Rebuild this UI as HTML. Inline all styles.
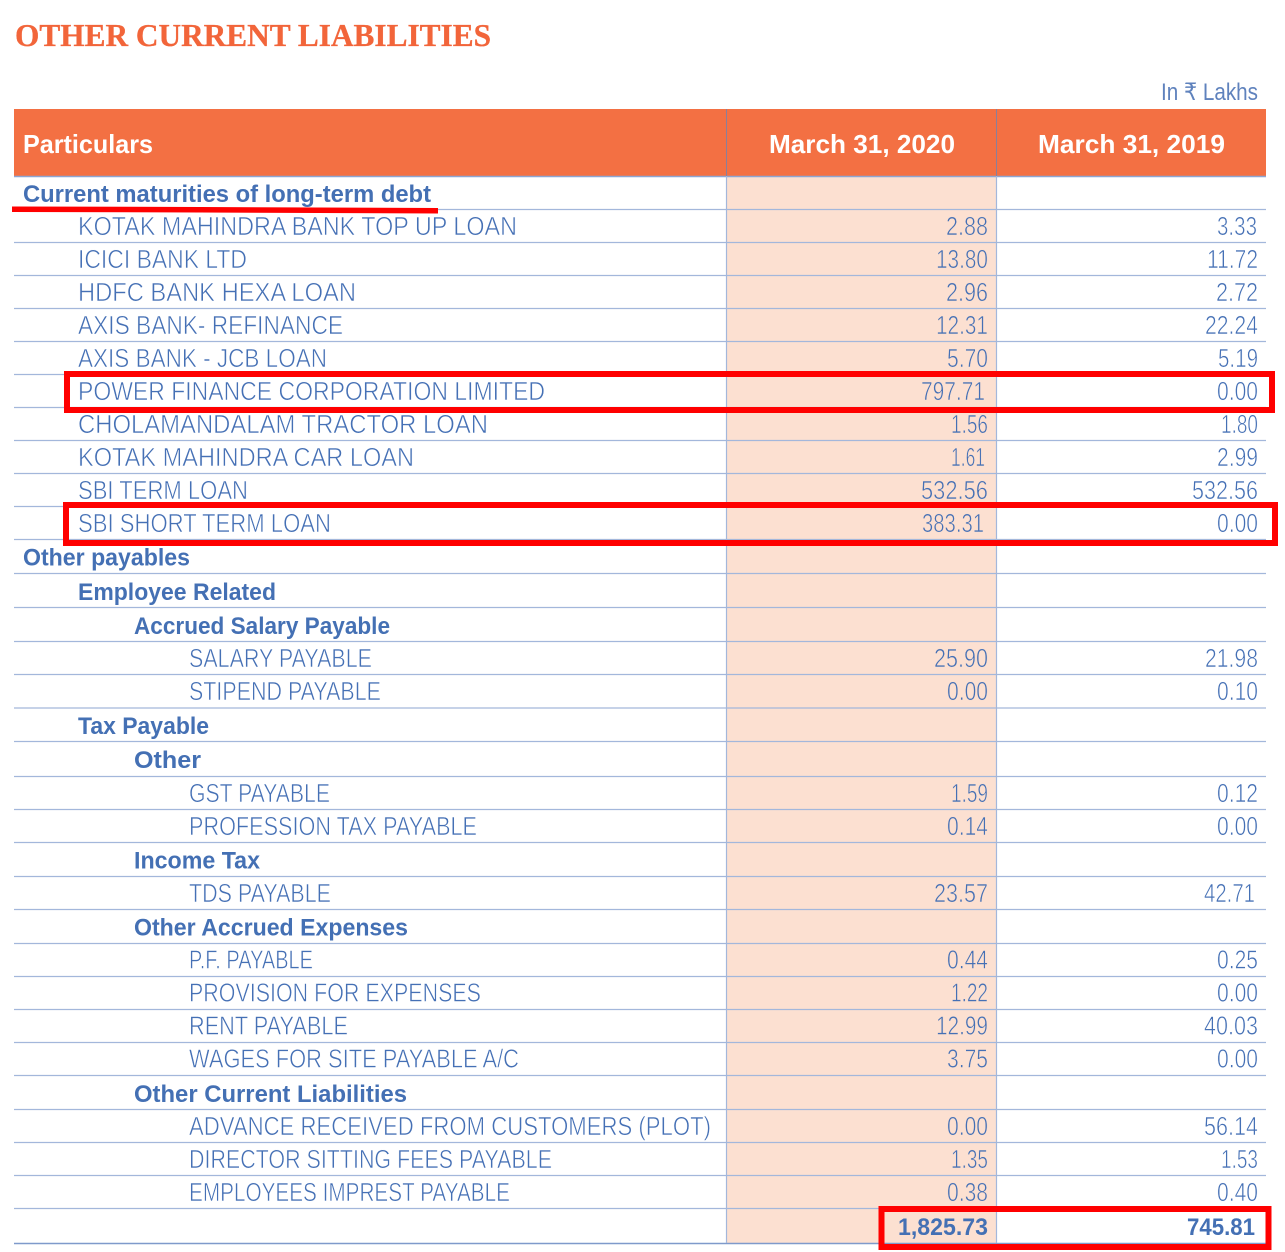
<!DOCTYPE html>
<html><head><meta charset="utf-8"><title>Other Current Liabilities</title>
<style>
html,body{margin:0;padding:0;background:#fff}
svg{display:block}
text{font-family:"Liberation Sans",sans-serif}
.r{font-size:26px;fill:#4570b5;stroke:#fff;stroke-width:.6px}
.n{font-size:26px;fill:#4570b5;stroke:#fff;stroke-width:.6px}
.p{font-size:26px;fill:#4570b5;stroke:#fce0d1;stroke-width:.6px}
.b{font-size:24px;font-weight:bold;fill:#4470b4}
.h{font-size:26px;font-weight:bold;fill:#fff}
line{stroke:#a3b7db;stroke-width:1.2}
</style></head><body>
<svg xmlns="http://www.w3.org/2000/svg" width="1285" height="1252" viewBox="0 0 1285 1252">
<rect width="1285" height="1252" fill="#fff"/>
<text x="15" y="46" textLength="476" lengthAdjust="spacingAndGlyphs" style="font-family:'Liberation Serif',serif;font-weight:bold;font-size:32px;fill:#f2653a;stroke:#f2653a;stroke-width:.3px">OTHER CURRENT LIABILITIES</text>
<text x="1161" y="100" textLength="97" lengthAdjust="spacingAndGlyphs" style="font-size:24px;fill:#5f82bd;font-family:'Liberation Sans','DejaVu Sans',sans-serif">In ₹ Lakhs</text>
<rect x="14" y="109" width="1252" height="67" fill="#f37043"/>
<rect x="727" y="177" width="270" height="1066" fill="#fce0d1"/>
<g>
<line x1="14" x2="1266" y1="176.5" y2="176.5" style="stroke:#8da5d2;stroke-width:1.5"/>
<line x1="14" x2="1266" y1="209.5" y2="209.5"/><line x1="14" x2="1266" y1="242.5" y2="242.5"/><line x1="14" x2="1266" y1="275.5" y2="275.5"/><line x1="14" x2="1266" y1="308.5" y2="308.5"/><line x1="14" x2="1266" y1="341.5" y2="341.5"/><line x1="14" x2="1266" y1="374.5" y2="374.5"/><line x1="14" x2="1266" y1="407.5" y2="407.5"/><line x1="14" x2="1266" y1="440.5" y2="440.5"/><line x1="14" x2="1266" y1="473.5" y2="473.5"/><line x1="14" x2="1266" y1="506.5" y2="506.5"/><line x1="14" x2="1266" y1="539.5" y2="539.5"/><line x1="14" x2="1266" y1="573.5" y2="573.5"/><line x1="14" x2="1266" y1="607.5" y2="607.5"/><line x1="14" x2="1266" y1="641.5" y2="641.5"/><line x1="14" x2="1266" y1="674.5" y2="674.5"/><line x1="14" x2="1266" y1="708" y2="708"/><line x1="14" x2="1266" y1="741.5" y2="741.5"/><line x1="14" x2="1266" y1="776.5" y2="776.5"/><line x1="14" x2="1266" y1="809.5" y2="809.5"/><line x1="14" x2="1266" y1="842.5" y2="842.5"/><line x1="14" x2="1266" y1="876.5" y2="876.5"/><line x1="14" x2="1266" y1="909.5" y2="909.5"/><line x1="14" x2="1266" y1="943.5" y2="943.5"/><line x1="14" x2="1266" y1="976.5" y2="976.5"/><line x1="14" x2="1266" y1="1009.5" y2="1009.5"/><line x1="14" x2="1266" y1="1042.5" y2="1042.5"/><line x1="14" x2="1266" y1="1075.5" y2="1075.5"/><line x1="14" x2="1266" y1="1109.5" y2="1109.5"/><line x1="14" x2="1266" y1="1142.5" y2="1142.5"/><line x1="14" x2="1266" y1="1175.5" y2="1175.5"/><line x1="14" x2="1266" y1="1208.5" y2="1208.5"/>
<line x1="14" x2="1266" y1="1243.5" y2="1243.5" style="stroke:#7f9acb;stroke-width:1.6"/>
<line x1="726.5" x2="726.5" y1="109" y2="176" style="stroke:#8a7f9a;stroke-width:1"/>
<line x1="996.5" x2="996.5" y1="109" y2="176" style="stroke:#8a7f9a;stroke-width:1"/>
<line x1="726.5" x2="726.5" y1="176" y2="1243"/>
<line x1="996.5" x2="996.5" y1="176" y2="1243"/>
</g>
<text class="h" x="23" y="153" textLength="130" lengthAdjust="spacingAndGlyphs">Particulars</text>
<text class="h" x="769" y="153" textLength="186" lengthAdjust="spacingAndGlyphs">March 31, 2020</text>
<text class="h" x="1038" y="153" textLength="187" lengthAdjust="spacingAndGlyphs">March 31, 2019</text>

<text class="b" x="23" y="202" textLength="408" lengthAdjust="spacingAndGlyphs">Current maturities of long-term debt</text>
<text class="r" x="78" y="235" textLength="439" lengthAdjust="spacingAndGlyphs">KOTAK MAHINDRA BANK TOP UP LOAN</text>
<text class="r" x="78" y="268" textLength="169" lengthAdjust="spacingAndGlyphs">ICICI BANK LTD</text>
<text class="r" x="78" y="301" textLength="278" lengthAdjust="spacingAndGlyphs">HDFC BANK HEXA LOAN</text>
<text class="r" x="78" y="334" textLength="265" lengthAdjust="spacingAndGlyphs">AXIS BANK- REFINANCE</text>
<text class="r" x="78" y="367" textLength="249" lengthAdjust="spacingAndGlyphs">AXIS BANK - JCB LOAN</text>
<text class="r" x="78" y="400" textLength="467" lengthAdjust="spacingAndGlyphs">POWER FINANCE CORPORATION LIMITED</text>
<text class="r" x="78" y="433" textLength="410" lengthAdjust="spacingAndGlyphs">CHOLAMANDALAM TRACTOR LOAN</text>
<text class="r" x="78" y="466" textLength="336" lengthAdjust="spacingAndGlyphs">KOTAK MAHINDRA CAR LOAN</text>
<text class="r" x="78" y="499" textLength="170" lengthAdjust="spacingAndGlyphs">SBI TERM LOAN</text>
<text class="r" x="78" y="532" textLength="253" lengthAdjust="spacingAndGlyphs">SBI SHORT TERM LOAN</text>
<text class="b" x="23" y="565.5" textLength="167" lengthAdjust="spacingAndGlyphs">Other payables</text>
<text class="b" x="78" y="600" textLength="198" lengthAdjust="spacingAndGlyphs">Employee Related</text>
<text class="b" x="134" y="634" textLength="256" lengthAdjust="spacingAndGlyphs">Accrued Salary Payable</text>
<text class="r" x="189" y="667" textLength="183" lengthAdjust="spacingAndGlyphs">SALARY PAYABLE</text>
<text class="r" x="189" y="700" textLength="192" lengthAdjust="spacingAndGlyphs">STIPEND PAYABLE</text>
<text class="b" x="78" y="734" textLength="131" lengthAdjust="spacingAndGlyphs">Tax Payable</text>
<text class="b" x="134" y="768" textLength="67" lengthAdjust="spacingAndGlyphs">Other</text>
<text class="r" x="189" y="802" textLength="141" lengthAdjust="spacingAndGlyphs">GST PAYABLE</text>
<text class="r" x="189" y="835" textLength="288" lengthAdjust="spacingAndGlyphs">PROFESSION TAX PAYABLE</text>
<text class="b" x="134" y="868.5" textLength="126" lengthAdjust="spacingAndGlyphs">Income Tax</text>
<text class="r" x="189" y="902" textLength="142" lengthAdjust="spacingAndGlyphs">TDS PAYABLE</text>
<text class="b" x="134" y="935.5" textLength="274" lengthAdjust="spacingAndGlyphs">Other Accrued Expenses</text>
<text class="r" x="189" y="968.5" textLength="124" lengthAdjust="spacingAndGlyphs">P.F. PAYABLE</text>
<text class="r" x="189" y="1001.5" textLength="292" lengthAdjust="spacingAndGlyphs">PROVISION FOR EXPENSES</text>
<text class="r" x="189" y="1034.5" textLength="159" lengthAdjust="spacingAndGlyphs">RENT PAYABLE</text>
<text class="r" x="189" y="1067.5" textLength="330" lengthAdjust="spacingAndGlyphs">WAGES FOR SITE PAYABLE A/C</text>
<text class="b" x="134" y="1102" textLength="273" lengthAdjust="spacingAndGlyphs">Other Current Liabilities</text>
<text class="r" x="189" y="1135" textLength="522" lengthAdjust="spacingAndGlyphs">ADVANCE RECEIVED FROM CUSTOMERS (PLOT)</text>
<text class="r" x="189" y="1168" textLength="363" lengthAdjust="spacingAndGlyphs">DIRECTOR SITTING FEES PAYABLE</text>
<text class="r" x="189" y="1201" textLength="321" lengthAdjust="spacingAndGlyphs">EMPLOYEES IMPREST PAYABLE</text>

<text class="p" x="946" y="235" textLength="42" lengthAdjust="spacingAndGlyphs">2.88</text>
<text class="n" x="1217" y="235" textLength="40" lengthAdjust="spacingAndGlyphs">3.33</text>
<text class="p" x="936" y="268" textLength="52" lengthAdjust="spacingAndGlyphs">13.80</text>
<text class="n" x="1207" y="268" textLength="51" lengthAdjust="spacingAndGlyphs">11.72</text>
<text class="p" x="946" y="301" textLength="42" lengthAdjust="spacingAndGlyphs">2.96</text>
<text class="n" x="1216" y="301" textLength="42" lengthAdjust="spacingAndGlyphs">2.72</text>
<text class="p" x="936" y="334" textLength="52" lengthAdjust="spacingAndGlyphs">12.31</text>
<text class="n" x="1205" y="334" textLength="53" lengthAdjust="spacingAndGlyphs">22.24</text>
<text class="p" x="947" y="367" textLength="41" lengthAdjust="spacingAndGlyphs">5.70</text>
<text class="n" x="1218" y="367" textLength="40" lengthAdjust="spacingAndGlyphs">5.19</text>
<text class="p" x="921" y="400" textLength="64" lengthAdjust="spacingAndGlyphs">797.71</text>
<text class="n" x="1217" y="400" textLength="41" lengthAdjust="spacingAndGlyphs">0.00</text>
<text class="p" x="951" y="433" textLength="37" lengthAdjust="spacingAndGlyphs">1.56</text>
<text class="n" x="1221" y="433" textLength="37" lengthAdjust="spacingAndGlyphs">1.80</text>
<text class="p" x="951" y="466" textLength="34" lengthAdjust="spacingAndGlyphs">1.61</text>
<text class="n" x="1217" y="466" textLength="41" lengthAdjust="spacingAndGlyphs">2.99</text>
<text class="p" x="921" y="499" textLength="67" lengthAdjust="spacingAndGlyphs">532.56</text>
<text class="n" x="1192" y="499" textLength="66" lengthAdjust="spacingAndGlyphs">532.56</text>
<text class="p" x="922" y="532" textLength="62" lengthAdjust="spacingAndGlyphs">383.31</text>
<text class="n" x="1217" y="532" textLength="41" lengthAdjust="spacingAndGlyphs">0.00</text>
<text class="p" x="934" y="667" textLength="54" lengthAdjust="spacingAndGlyphs">25.90</text>
<text class="n" x="1205" y="667" textLength="53" lengthAdjust="spacingAndGlyphs">21.98</text>
<text class="p" x="947" y="700" textLength="41" lengthAdjust="spacingAndGlyphs">0.00</text>
<text class="n" x="1217" y="700" textLength="41" lengthAdjust="spacingAndGlyphs">0.10</text>
<text class="p" x="951" y="802" textLength="37" lengthAdjust="spacingAndGlyphs">1.59</text>
<text class="n" x="1217" y="802" textLength="41" lengthAdjust="spacingAndGlyphs">0.12</text>
<text class="p" x="947" y="835" textLength="41" lengthAdjust="spacingAndGlyphs">0.14</text>
<text class="n" x="1217" y="835" textLength="41" lengthAdjust="spacingAndGlyphs">0.00</text>
<text class="p" x="934" y="902" textLength="54" lengthAdjust="spacingAndGlyphs">23.57</text>
<text class="n" x="1204" y="902" textLength="51" lengthAdjust="spacingAndGlyphs">42.71</text>
<text class="p" x="947" y="968.5" textLength="41" lengthAdjust="spacingAndGlyphs">0.44</text>
<text class="n" x="1217" y="968.5" textLength="41" lengthAdjust="spacingAndGlyphs">0.25</text>
<text class="p" x="951" y="1001.5" textLength="37" lengthAdjust="spacingAndGlyphs">1.22</text>
<text class="n" x="1217" y="1001.5" textLength="41" lengthAdjust="spacingAndGlyphs">0.00</text>
<text class="p" x="936" y="1034.5" textLength="52" lengthAdjust="spacingAndGlyphs">12.99</text>
<text class="n" x="1204" y="1034.5" textLength="54" lengthAdjust="spacingAndGlyphs">40.03</text>
<text class="p" x="947" y="1067.5" textLength="41" lengthAdjust="spacingAndGlyphs">3.75</text>
<text class="n" x="1217" y="1067.5" textLength="41" lengthAdjust="spacingAndGlyphs">0.00</text>
<text class="p" x="947" y="1135" textLength="41" lengthAdjust="spacingAndGlyphs">0.00</text>
<text class="n" x="1204" y="1135" textLength="54" lengthAdjust="spacingAndGlyphs">56.14</text>
<text class="p" x="951" y="1168" textLength="37" lengthAdjust="spacingAndGlyphs">1.35</text>
<text class="n" x="1221" y="1168" textLength="37" lengthAdjust="spacingAndGlyphs">1.53</text>
<text class="p" x="947" y="1201" textLength="41" lengthAdjust="spacingAndGlyphs">0.38</text>
<text class="n" x="1217" y="1201" textLength="41" lengthAdjust="spacingAndGlyphs">0.40</text>
<text class="b" x="898" y="1235" textLength="90" lengthAdjust="spacingAndGlyphs">1,825.73</text>
<text class="b" x="1187" y="1235" textLength="68" lengthAdjust="spacingAndGlyphs">745.81</text>

<polygon points="12,206.5 200,207 438,208 438,213.5 200,212.5 12,212" fill="#ff0000"/>
<rect x="67" y="374" width="1205" height="36" fill="none" stroke="#ff0000" stroke-width="6"/>
<rect x="66" y="505" width="1209" height="38" fill="none" stroke="#ff0000" stroke-width="6"/>
<rect x="881.5" y="1209" width="387" height="38" fill="none" stroke="#ff0000" stroke-width="6"/>
</svg>
</body></html>
